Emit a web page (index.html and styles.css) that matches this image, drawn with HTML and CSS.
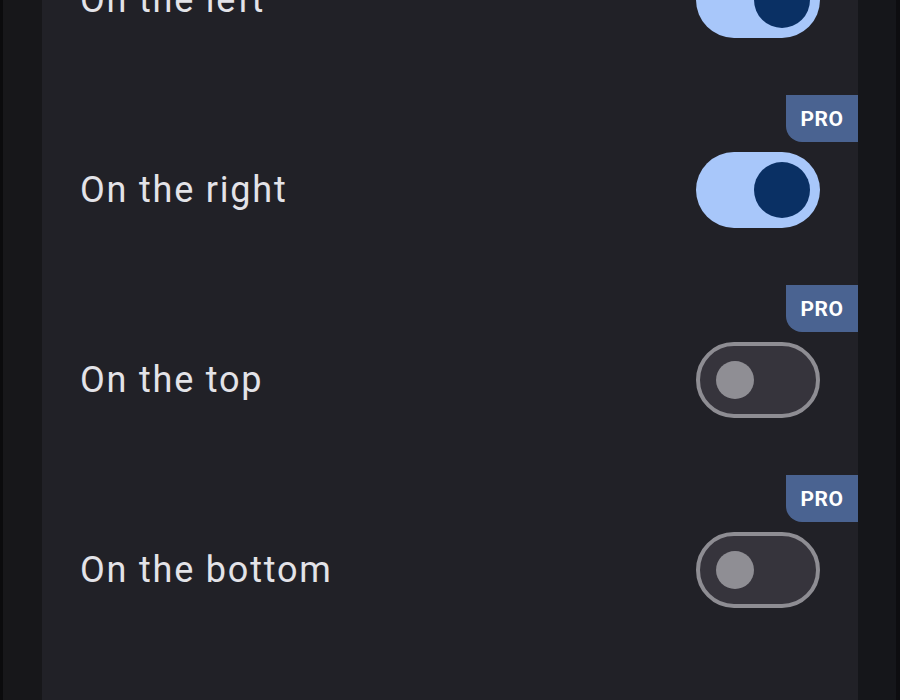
FILE: index.html
```html
<!DOCTYPE html>
<html>
<head>
<meta charset="utf-8">
<link rel="stylesheet" href="styles.css">
</head>
<body>
<div class="frame">
  <div class="edge-left"></div>
  <div class="panel">
    <div class="list">
      <div class="row">
        <span class="label">On the left</span>
        <div class="toggle on"><div class="thumb"></div></div>
      </div>
      <div class="row">
        <span class="badge">PRO</span>
        <span class="label">On the right</span>
        <div class="toggle on"><div class="thumb"></div></div>
      </div>
      <div class="row">
        <span class="badge">PRO</span>
        <span class="label">On the top</span>
        <div class="toggle off"><div class="thumb"></div></div>
      </div>
      <div class="row">
        <span class="badge">PRO</span>
        <span class="label">On the bottom</span>
        <div class="toggle off"><div class="thumb"></div></div>
      </div>
    </div>
  </div>
  <div class="edge-right"></div>
</div>
</body>
</html>
```
FILE: styles.css
```css
html, body {
  margin: 0;
  padding: 0;
  height: 100%;
  background: #111114;
  overflow: hidden;
}
.frame {
  display: flex;
  height: 700px;
  width: 900px;
}
.edge-left {
  width: 39px;
  background: #17171a;
  border-left: 3px solid #0b0b0d;
}
.edge-right {
  width: 38px;
  background: #15161a;
  border-right: 4px solid #0d0d10;
}
.panel {
  flex: 1;
  background: #212127;
  overflow: hidden;
}
.list {
  margin-top: -95px;
  display: flex;
  flex-direction: column;
}
.row {
  position: relative;
  height: 190px;
  display: flex;
  align-items: center;
  justify-content: space-between;
  padding: 0 38px;
}
.label {
  font-family: Roboto, "Noto Sans", sans-serif;
  font-size: 36px;
  color: #e3e3e8;
  letter-spacing: 1.8px;
}
.badge {
  position: absolute;
  top: 0;
  right: 0;
  width: 72px;
  height: 47px;
  background: #4a6391;
  border-bottom-left-radius: 16px;
  color: #ffffff;
  font-family: Roboto, "Noto Sans", sans-serif;
  font-weight: 700;
  font-size: 21px;
  letter-spacing: 0.5px;
  display: flex;
  align-items: center;
  justify-content: center;
}
.toggle {
  width: 124px;
  height: 76px;
  box-sizing: border-box;
  border-radius: 38px;
  display: flex;
  align-items: center;
}
.toggle.on {
  background: #a8c7fa;
  justify-content: flex-end;
  padding-right: 10px;
}
.toggle.on .thumb {
  width: 56px;
  height: 56px;
  border-radius: 50%;
  background: #0a3064;
}
.toggle.off {
  background: #36343c;
  border: 4px solid #8e8d93;
  padding-left: 16px;
}
.toggle.off .thumb {
  width: 38px;
  height: 38px;
  border-radius: 50%;
  background: #8f8e94;
}
```
